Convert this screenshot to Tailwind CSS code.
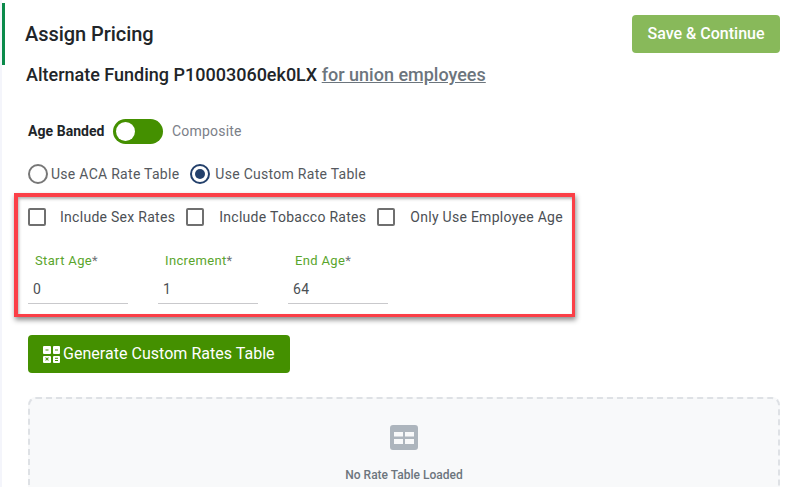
<!doctype html>
<html>

<head>
    <meta charset="UTF-8">
    <meta name="viewport" content="width=device-width, initial-scale=1.0">
    <script src="https://cdn.jsdelivr.net/npm/@tailwindcss/browser@4"></script>
</head>

<body class="bg-white overflow-hidden">
    <div class="relative w-[788px] h-[487px] overflow-hidden flex font-['Roboto',sans-serif] text-[#212529]">
        <div class="w-[2px] shrink-0 bg-[#f4f5fb]"></div>
        <div class="flex-1 min-w-0">
            <div class="flex justify-between h-[62px] mt-[3px] border-l-[3px] border-[#0b8a4a] pl-[20px] pr-[8px]">
                <h1 class="text-[20px] leading-[23px] font-medium tracking-[-0.05px] mt-[20px]">Assign Pricing</h1>
                <button type="button" class="w-[148px] h-[38px] mt-[12px] rounded-[4px] bg-[#88b95a] text-white text-[16px] font-medium">Save &amp; Continue</button>
            </div>
            <div class="ml-[24px] mt-[-1px] text-[18px] leading-[21px] font-medium">Alternate Funding P10003060ek0LX <a href="#" class="text-[#6c757d] underline">for union employees</a></div>

            <div class="flex items-center ml-[26px] mt-[33px] h-[26px]">
                <span class="text-[14px] font-bold w-[85px] tracking-[0.05px]">Age Banded</span>
                <div class="w-[50px] h-[25px] rounded-full bg-[#449000] flex items-center pl-[3px]">
                    <div class="w-[19px] h-[19px] rounded-full bg-white"></div>
                </div>
                <span class="ml-[9px] text-[14px] text-[#7b8088] tracking-[0.2px]">Composite</span>
            </div>

            <div class="flex items-center ml-[26px] mt-[19px] h-[22px] text-[14px] text-[#55595e] tracking-[0.28px]">
                <span class="w-[20px] h-[20px] rounded-full border-2 border-[#777]"></span>
                <span class="ml-[3px]">Use ACA Rate Table</span>
                <span class="ml-[11px] w-[20px] h-[20px] rounded-full border-[2.5px] border-[#23406b] flex items-center justify-center"><span class="w-[10px] h-[10px] rounded-full bg-[#23406b]"></span></span>
                <span class="ml-[5px]">Use Custom Rate Table</span>
            </div>

            <div class="ml-[12px] mt-[8px] w-[561px] h-[124px] border-[3px] border-t-[4px] border-l-[4px] border-[#fb3f47] shadow-[1px_3px_5px_rgba(0,0,0,0.45),inset_1px_2px_3px_rgba(0,0,0,0.3)] pl-[10px]">
                <div class="flex items-center mt-[9px] h-[22px] text-[14px] text-[#4c5055] tracking-[0.28px]">
                    <span class="w-[18px] h-[18px] rounded-[2px] border-2 border-[#6f6f6f]"></span>
                    <span class="ml-[14px]">Include Sex Rates</span>
                    <span class="ml-[11px] w-[18px] h-[18px] rounded-[2px] border-2 border-[#6f6f6f]"></span>
                    <span class="ml-[15px]">Include Tobacco Rates</span>
                    <span class="ml-[11px] w-[18px] h-[18px] rounded-[2px] border-2 border-[#6f6f6f]"></span>
                    <span class="ml-[15px]">Only Use Employee Age</span>
                </div>
                <div class="flex gap-[30px] mt-[25px]">
                    <div class="w-[100px] border-b border-[#c9c9cc] h-[51px]">
                        <div class="ml-[7px] text-[13px] leading-[16px] text-[#5aa52c] tracking-[0.35px]">Start Age<span class="text-[#6f7378]">*</span></div>
                        <div class="ml-[5px] mt-[12px] text-[14px] leading-[17px] text-[#4c5055] tracking-[0.3px]">0</div>
                    </div>
                    <div class="w-[100px] border-b border-[#c9c9cc] h-[51px]">
                        <div class="ml-[7px] text-[13px] leading-[16px] text-[#5aa52c] tracking-[0.35px]">Increment<span class="text-[#6f7378]">*</span></div>
                        <div class="ml-[5px] mt-[12px] text-[14px] leading-[17px] text-[#4c5055] tracking-[0.3px]">1</div>
                    </div>
                    <div class="w-[100px] border-b border-[#c9c9cc] h-[51px]">
                        <div class="ml-[7px] text-[13px] leading-[16px] text-[#5aa52c] tracking-[0.35px]">End Age<span class="text-[#6f7378]">*</span></div>
                        <div class="ml-[5px] mt-[12px] text-[14px] leading-[17px] text-[#4c5055] tracking-[0.3px]">64</div>
                    </div>
                </div>
            </div>

            <button type="button" class="ml-[26px] mt-[18px] w-[262px] h-[38px] rounded-[4px] bg-[#449000] text-white text-[16px] tracking-[0.03px] flex items-center pl-[15px] gap-[3px]">
                <svg width="17" height="17" viewBox="0 0 17 17" fill="#fff">
                    <path fill-rule="evenodd" d="M1 0h6a1 1 0 0 1 1 1v6a1 1 0 0 1-1 1H1a1 1 0 0 1-1-1V1a1 1 0 0 1 1-1zm1.5 3.5v1h3v-1z"/>
                    <path fill-rule="evenodd" d="M11 0h5a1 1 0 0 1 1 1v6a1 1 0 0 1-1 1h-5a1 1 0 0 1-1-1V1a1 1 0 0 1 1-1zm1 3.5v1h3v-1z"/>
                    <path fill-rule="evenodd" d="M1 10h6a1 1 0 0 1 1 1v5a1 1 0 0 1-1 1H1a1 1 0 0 1-1-1v-5a1 1 0 0 1 1-1zm1.2 1.9l1.3 1.1-1.3 1.1.6.7L4 13.7l1.2 1.1.6-.7-1.3-1.1 1.3-1.1-.6-.7L4 12.3l-1.2-1.1z"/>
                    <path fill-rule="evenodd" d="M11 10h5a1 1 0 0 1 1 1v5a1 1 0 0 1-1 1h-5a1 1 0 0 1-1-1v-5a1 1 0 0 1 1-1zm1 1.7v1h3v-1zm0 2.4v1h3v-1z"/>
                </svg>
                <span>Generate Custom Rates Table</span>
            </button>

            <div class="ml-[26px] mt-[24px] w-[752px] h-[140px] rounded-[8px] border-2 border-dashed border-[#dee1e5] bg-[#f8f9fa] flex flex-col items-center pt-[26px]">
                <svg width="28" height="25" viewBox="0 0 28 25" fill="#adb5bd">
                    <path fill-rule="evenodd" d="M3 0h22a3 3 0 0 1 3 3v19a3 3 0 0 1-3 3H3a3 3 0 0 1-3-3V3a3 3 0 0 1 3-3zm1 7v4.5h9V7zm11 0v4.5h9V7zM4 14v5h9v-5zm11 0v5h9v-5z"/>
                </svg>
                <div class="mt-[17px] text-[12px] leading-[16px] font-medium text-[#6c757d]">No Rate Table Loaded</div>
            </div>
        </div>
    </div>
</body>

</html>
